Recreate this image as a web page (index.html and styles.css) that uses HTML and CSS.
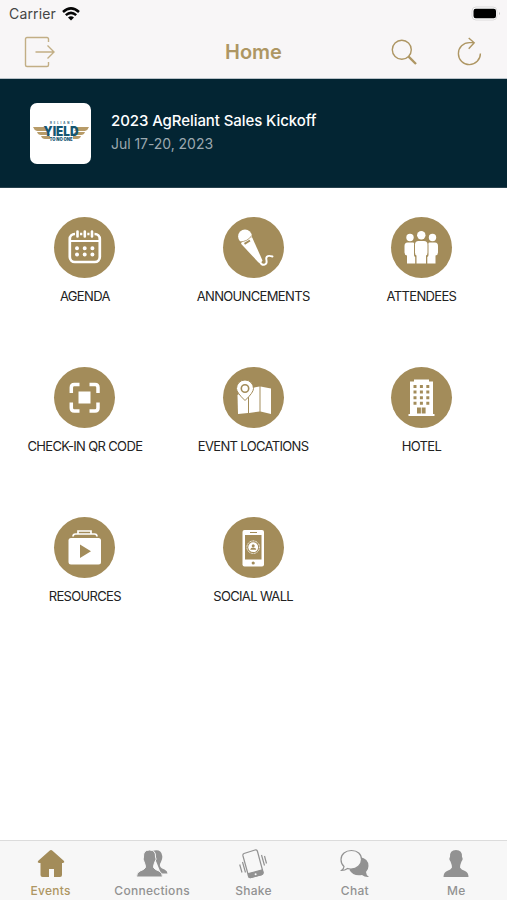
FILE: index.html
```html
<!DOCTYPE html>
<html lang="en">
<head>
    <meta charset="utf-8">
    <title>Home</title>
    <link rel="stylesheet" href="styles.css">
</head>
<body>
    <header class="top">
        <div class="status-bar">
            <span class="carrier">Carrier</span>
            <svg class="wifi" width="18" height="14" viewBox="0 0 18 14">
                <path d="M1 5Q9-2.2 17 5M3.8 8.1Q9 3.6 14.2 8.1" fill="none" stroke="#050505" stroke-width="2.5"/>
                <path d="M6 10.4Q9 8 12 10.4L9 13.5Z" fill="#050505"/>
            </svg>
            <svg class="battery" width="30" height="15" viewBox="0 0 30 15">
                <rect x="1" y="1" width="25" height="13" rx="4" fill="#fff" stroke="#dcdadb"/>
                <rect x="2.5" y="2.8" width="22.5" height="9.4" rx="2.2" fill="#000"/>
                <path d="M28 6Q30 7.5 28 9Z" fill="#bbb"/>
            </svg>
        </div>
        <nav class="nav-bar">
            <svg class="exit" width="32" height="32" viewBox="0 0 32 32">
                <path d="M24.5 6V3Q24.5 1.5 23 1.5H3Q1.5 1.5 1.5 3V29Q1.5 30.5 3 30.5H23Q24.5 30.5 24.5 29V26M11.5 16H30M23.5 9.5L30 16L23.5 22.5"/>
            </svg>
            <h1>Home</h1>
            <svg class="search" width="27" height="27" viewBox="0 0 27 27">
                <circle cx="10.8" cy="10.8" r="9.5"/>
                <path d="M17.6 17.6L25 25" stroke-width="2.3"/>
            </svg>
            <svg class="reload" width="25" height="29" viewBox="0 0 25 29">
                <path d="M23.4 16.5A11 11 0 1 1 12.4 5.6H17M11.7 1L17.2 5.8L11.7 11.7"/>
            </svg>
        </nav>
    </header>

    <section class="event">
        <div class="logo">
            <svg width="58" height="24" viewBox="0 0 58 24">
                <g fill="#b79b68">
                    <path d="M1 6H14L17 10H5Q2 9 1 6ZM5 11H16L18 14H9Q6 14 5 11ZM9 15H18V18H13Q10 18 9 15Z"/>
                    <path d="M57 6H45L42 10H53Q56 9 57 6ZM53 11H43L41 14H49Q52 14 53 11ZM49 15H41V18H45Q48 18 49 15Z"/>
                </g>
                <text class="logo-small" x="18" y="3.2" textLength="23">RELIANT</text>
                <text class="logo-big" x="11.5" y="15" textLength="35" lengthAdjust="spacingAndGlyphs">YIELD</text>
                <text class="logo-sub" x="17.5" y="20.2" textLength="23" lengthAdjust="spacingAndGlyphs">TO NO ONE</text>
            </svg>
        </div>
        <div>
            <h2>2023 AgReliant Sales Kickoff</h2>
            <p>Jul 17-20, 2023</p>
        </div>
    </section>

    <main class="menu">
        <div class="item">
            <svg class="icon" viewBox="0 0 61 61">
                <rect x="15.8" y="17" width="30" height="28" rx="5" fill="none" stroke="#fff" stroke-width="2.7"/>
                <path d="M16 24H45" stroke="#fff" stroke-width="2.2"/>
                <path d="M23.5 15V19M30.8 15V19M38 15V19" stroke="#a38c5a" stroke-width="5"/>
                <path d="M23.5 14.5V19.5M30.8 14.5V19.5M38 14.5V19.5" stroke="#fff" stroke-width="2.6" stroke-linecap="round"/>
                <path d="M23 31.2H23.01M30.7 31.2H30.71M38.4 31.2H38.41M23 37.4H23.01M30.7 37.4H30.71M38.4 37.4H38.41" stroke="#fff" stroke-width="4" stroke-linecap="round"/>
            </svg>
            <span>AGENDA</span>
        </div>
        <div class="item">
            <svg class="icon" viewBox="0 0 61 61">
                <circle cx="22" cy="19.5" r="6.9" fill="#fff"/>
                <path d="M17.8 26.5L29.2 20.5L39.5 43.500Q38 47 35.500 45.500Z" fill="#fff"/>
                <path d="M16.500 24.800Q24.500 25 28.800 18.500" fill="none" stroke="#a38c5a" stroke-width=".8"/>
                <path d="M21.500 26.800L27 23.500" stroke="#a38c5a" stroke-width="2"/>
                <path d="M37 45C39.500 50 44.500 47.500 43.500 43.500C42 38 46.500 38.500 49.500 39.500" fill="none" stroke="#fff" stroke-width="1.900" stroke-linecap="round"/>
            </svg>
            <span>ANNOUNCEMENTS</span>
        </div>
        <div class="item">
            <svg class="icon" viewBox="0 0 61 61" fill="#fff">
                <circle cx="19" cy="20.500" r="3.700"/>
                <circle cx="30.300" cy="18.300" r="4.200"/>
                <circle cx="41.500" cy="20.500" r="3.700"/>
                <path d="M16.500 25.500H22Q23.500 25.500 23 28V38Q23 39.500 24.200 40V46.500H16V38.500Q13.500 38 13.500 35.500V29Q13.500 25.500 16.500 25.500Z"/>
                <path d="M44 25.500H38.500Q37 25.500 37.500 28V38Q37.500 39.500 36.300 40V46.500H44.500V38.500Q47 38 47 35.500V29Q47 25.500 44 25.500Z"/>
                <path d="M27.500 24H33Q36.500 24 36.500 27.500V35.500Q36.500 38 35 38.500V46.500H25.500V38.500Q24 38 24 35.500V27.500Q24 24 27.500 24Z"/>
            </svg>
            <span>ATTENDEES</span>
        </div>
        <div class="item">
            <svg class="icon" viewBox="0 0 61 61">
                <path d="M17.300 26V20.500Q17.300 17.500 20.300 17.500H25.500M35.500 17.500H41Q44 17.500 44 20.500V26M44 35.500V41Q44 44 41 44H35.500M25.500 44H20.300Q17.300 44 17.300 41V35.500" fill="none" stroke="#fff" stroke-width="3.500"/>
                <rect x="24.500" y="24.500" width="12" height="12" fill="#fff"/>
            </svg>
            <span>CHECK-IN QR CODE</span>
        </div>
        <div class="item">
            <svg class="icon" viewBox="0 0 61 61" fill="#fff">
                <path d="M14.500 28L25 21V46L15 47Z"/>
                <path d="M26 21.500L36.500 19.500V44.500L26 46Z"/>
                <path d="M37.500 19.500L48 21.500V47L37.500 44.500Z"/>
                <path d="M22 33.500Q13.500 25.500 13.500 21.500A8.300 8.300 0 0 1 30.500 21.500Q30.500 25.500 22 33.500Z" stroke="#a38c5a"/>
                <circle cx="22" cy="21.500" r="3.700" fill="none" stroke="#a38c5a" stroke-width="1.600"/>
            </svg>
            <span>EVENT LOCATIONS</span>
        </div>
        <div class="item">
            <svg class="icon" viewBox="0 0 61 61">
                <path d="M19 14.500H23V12.500H38V14.500H42V47H43.500V49H17.500V47H19Z" fill="#fff"/>
                <path d="M22.500 19.500H25.500M28.900 19.500H31.900M35.300 19.500H38.300M22.500 25H25.500M28.900 25H31.900M35.300 25H38.300M22.500 30.700H25.500M28.900 30.700H31.900M35.300 30.700H38.300M22.500 36.300H25.500M28.900 36.300H31.900M35.300 36.300H38.300" stroke="#a38c5a" stroke-width="3"/>
                <path d="M26 40.500H29.900V46.500H26ZM30.700 40.500H34.600V46.500H30.700Z" fill="#a38c5a"/>
            </svg>
            <span>HOTEL</span>
        </div>
        <div class="item">
            <svg class="icon" viewBox="0 0 61 61">
                <rect x="14.500" y="21" width="32.500" height="26.500" rx="2.500" fill="#fff"/>
                <path d="M19 19.500Q19 17 21.500 17H40.500Q43 17 43 19.500M24 16.500V14H37V16.500" fill="none" stroke="#fff" stroke-width="1.700"/>
                <path d="M26 27.500L37 34.200L26 41Z" fill="#a38c5a"/>
            </svg>
            <span>RESOURCES</span>
        </div>
        <div class="item">
            <svg class="icon" viewBox="0 0 61 61">
                <rect x="19.500" y="13" width="21.500" height="36.500" rx="2" fill="#fff"/>
                <rect x="22" y="18" width="16.500" height="24.500" fill="#a38c5a"/>
                <path d="M27 15.500H34" stroke="#a38c5a"/>
                <circle cx="30.200" cy="46" r="1.600" fill="#a38c5a"/>
                <circle cx="30.200" cy="30.200" r="6.300" fill="none" stroke="#fff" stroke-dasharray="1 .6"/>
                <circle cx="30.200" cy="30.200" r="4.900" fill="#fff"/>
                <circle cx="30.200" cy="28.800" r="1.500" fill="#a38c5a"/>
                <path d="M27.200 32.800Q27.500 30.500 30.200 30.500T33.200 32.800Z" fill="#a38c5a"/>
            </svg>
            <span>SOCIAL WALL</span>
        </div>
    </main>

    <footer class="tabs">
        <div class="tab active">
            <svg width="30" height="30" viewBox="0 0 30 30" fill="currentColor">
                <path d="M13.500 1.700Q15 .5 16.500 1.700L28 12Q29 13.500 27 14H26V26Q26 28 24 28H18V20H13V28H6.500Q4.500 28 4.500 26V14H3Q1 13.500 2 12Z"/>
            </svg>
            <span>Events</span>
        </div>
        <div class="tab">
            <svg width="32" height="30" viewBox="0 0 32 30" fill="currentColor">
                <path d="M16 2Q25-.5 26 6Q27 8.500 25 13Q23.500 15 24 17Q24.500 19 28.500 20.500Q31.500 22 31.500 24.500H25Z"/>
                <path d="M7.500 8Q7 1 13.500 1T19.500 8Q21 10 19 12.500Q17.500 16 17.500 18.500Q18.500 20.500 23 22Q26.500 23.500 26.500 28H.500Q.500 23.500 4 22Q8.500 20.500 9.500 18.500Q9.500 16 8 12.500Q6.500 10 7.500 8Z" stroke="#f7f7f7"/>
            </svg>
            <span>Connections</span>
        </div>
        <div class="tab">
            <svg width="30" height="30" viewBox="0 0 30 30" fill="none" stroke="currentColor" stroke-width="1.200">
                <path d="M6 4.500L17 1Q19 .5 19.500 2.500L25 23Q25.500 25 23.500 25.800L13 28.500Q11 29 10.500 27L5 7Q4.500 5 6 4.500ZM4.500 13L7.500 23.500M1.700 15.500L4 23.500M23.500 6L26.500 16.500M26.500 7L28.500 14.500"/>
                <path d="M10.500 24.500L24 21L25 23.500Q25 25 23.500 25.800L13 28.500Q11 29 10.500 27Z" fill="currentColor"/>
                <circle cx="17.600" cy="25.300" r="1" fill="#f7f7f7" stroke="none"/>
            </svg>
            <span>Shake</span>
        </div>
        <div class="tab">
            <svg width="30" height="30" viewBox="0 0 30 30">
                <path d="M20 8Q28.500 9.500 28.500 17Q28.500 20.500 26 23Q26 26 29 28Q25 28.500 22 26Q13 27.500 9.500 21Z" fill="currentColor"/>
                <path d="M11.500 1.500C17.500 1.500 21.500 5 21.500 10.500S17 20 11 20Q9 20 7.500 19.500Q5 21.500 1.500 21.500Q4 19.500 4 17.500Q1 15 1 10.500C1 5 5.500 1.500 11.500 1.500Z" fill="#f7f7f7" stroke="currentColor" stroke-width="1.200"/>
            </svg>
            <span>Chat</span>
        </div>
        <div class="tab">
            <svg width="26" height="30" viewBox="0 0 26 30" fill="currentColor">
                <path d="M7 8Q6.500 1 13 1T19 8Q20.500 10 18.500 12.500Q17 16 17 18.500Q18 20.500 22 22Q25.500 23.500 25.500 28H.500Q.500 23.500 4 22Q8 20.500 9 18.500Q9 16 7.500 12.500Q5.500 10 7 8Z"/>
            </svg>
            <span>Me</span>
        </div>
    </footer>
</body>
</html>
```
FILE: styles.css
```css
* {
    box-sizing: border-box;
}
body {
    margin: 0;
    height: 900px;
    display: flex;
    flex-direction: column;
    overflow: hidden;
    background-color: #fff;
    font-family: Inter, "Liberation Sans", sans-serif;
}
h1, h2, p {
    margin: 0;
}
svg {
    display: block;
}
.top {
    height: 79px;
    background-color: #f8f6f7;
    border-bottom: 1px solid #b9c2c9;
}
.status-bar {
    display: flex;
    align-items: center;
    height: 27px;
    padding: 0 6px 0 9px;
}
.carrier {
    font-size: 14px;
    letter-spacing: 0.15px;
    color: #454545;
}
.wifi {
    margin-left: 6px;
}
.battery {
    margin-left: auto;
}
/* Navigation bar */
.nav-bar {
    display: grid;
    grid-template-columns: 100px 1fr 52px 48px;
    align-items: center;
    height: 50px;
    padding: 0 0 0 24px;
    color: #ae9663;
}
.nav-bar svg {
    fill: none;
    stroke: #ae9663;
    stroke-width: 1.4;
}
.nav-bar .exit {
    stroke: #c2ae85;
}
.nav-bar h1 {
    font-size: 20px;
    font-weight: 600;
    padding-left: 101px;
}
.search {
    margin-left: -16px;
}
.reload {
    margin-top: -2px;
    margin-left: -2px;
}
/* Event banner */
.event {
    display: flex;
    align-items: center;
    height: 109px;
    padding-left: 30px;
    background-color: #032533;
    border-bottom: 1px solid #28424e;
}
.logo {
    display: flex;
    align-items: center;
    justify-content: center;
    width: 61px;
    height: 61px;
    margin-right: 20px;
    border-radius: 7px;
    background-color: #fff;
}
.logo text {
    fill: #155672;
    font-weight: 700;
}
.logo .logo-small {
    font-size: 2.8px;
}
.logo .logo-big {
    font-size: 13px;
    font-weight: 900;
}
.logo .logo-sub {
    font-size: 4.8px;
    font-weight: 900;
}
.event h2 {
    font-size: 15px;
    line-height: 22px;
    font-weight: 500;
    letter-spacing: -0.08px;
    color: #fff;
}
.event p {
    font-size: 14px;
    line-height: 24px;
    letter-spacing: -0.05px;
    color: #9ba8af;
}
/* Menu grid */
.menu {
    display: grid;
    grid-template-columns: repeat(3, 168.3px);
    grid-auto-rows: 150.3px;
    padding-top: 28.5px;
    padding-left: 0.7px;
    flex: 1;
    align-content: start;
}
.item {
    display: flex;
    flex-direction: column;
    align-items: center;
    font-size: 13px;
    line-height: 16px;
    letter-spacing: -0.65px;
    white-space: nowrap;
    color: #222;
}
.icon {
    width: 61px;
    height: 61px;
    margin-bottom: 10px;
    border-radius: 50%;
    background-color: #a38c5a;
}
/* Bottom tabs */
.tabs {
    display: grid;
    grid-template-columns: repeat(5, 1fr);
    height: 60px;
    border-top: 1px solid #dcdcdc;
    background-color: #f7f7f7;
}
.tab {
    display: flex;
    flex-direction: column;
    align-items: center;
    padding-top: 8px;
    font-size: 12px;
    line-height: 14px;
    font-weight: 500;
    letter-spacing: 0.28px;
    color: #929292;
}
.tab svg {
    margin-bottom: 5px;
}
.active {
    color: #ae9663;
}
.active svg {
    color: #a38c5a;
}
```
